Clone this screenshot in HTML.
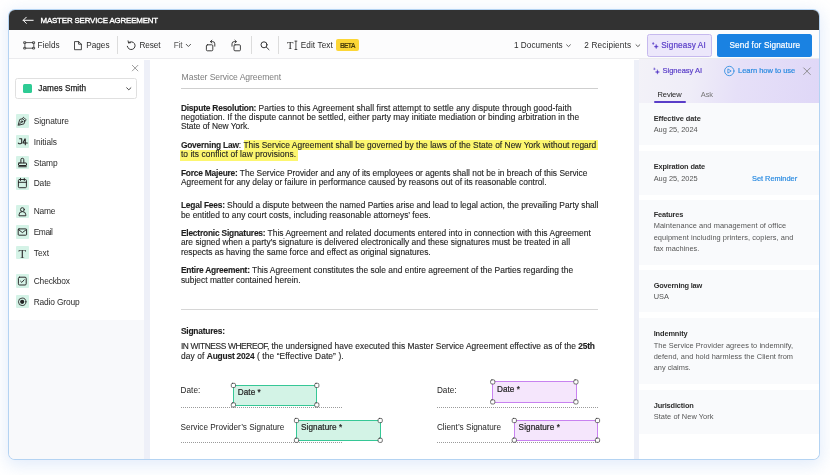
<!DOCTYPE html>
<html lang="en"><head><meta charset="utf-8"><title>Master Service Agreement</title>
<style>
html,body{margin:0;padding:0;}
body{width:830px;height:475px;position:relative;overflow:hidden;background:#fff;font-family:"Liberation Sans",sans-serif;}
.t{position:absolute;white-space:nowrap;line-height:12px;height:12px;}
.a{position:absolute;}
b{font-weight:700;letter-spacing:-0.2px;}
.hl{background:#fbf66b;padding:1.3px 1.5px 1.3px 0;}
svg{position:absolute;overflow:visible;}
.ib{left:15.5px;width:13.3px;height:13.3px;background:#d5f3e7;border-radius:1px;}
.dot{height:0;border-top:1px dotted #9a9a9a;}
.fg{background:#d3f3e6;border:1.3px solid #36c796;box-sizing:border-box;}
.fp{background:#f5e6fc;border:1.4px solid #c882f0;box-sizing:border-box;}
.txt{position:absolute;left:0;top:0;width:830px;height:475px;will-change:transform;}

</style></head><body>
<!-- outer frame -->
<div class="a" id="frame" style="left:9px;top:10px;width:810px;height:448.6px;border-radius:6px;box-shadow:0 0 0 1px #b4d3f2, 0 4px 16px 3px rgba(130,175,235,0.22);background:#fff;overflow:hidden;">
  <!-- header -->
  <div class="a" style="left:0;top:0;width:811px;height:19.6px;background:#323232;"></div>
  <!-- toolbar -->
  <div class="a" style="left:0;top:19.6px;width:811px;height:29.9px;background:#fcfcfd;border-bottom:1px solid #ebebee;box-sizing:border-box;"></div>
  <!-- workspace bg -->
  <div class="a" style="left:0;top:49.5px;width:811px;height:401px;background:#eef0f8;"></div>
  <!-- sidebar -->
  <div class="a" style="left:0;top:49px;width:135px;height:401px;background:#f8f9fb;"></div>
  <div class="a" style="left:0;top:49px;width:135px;height:260.6px;background:#fff;"></div>
  <!-- document -->
  <div class="a" style="left:141px;top:49px;width:483.5px;height:401px;background:#fff;"></div>
  <!-- right panel -->
  <div class="a" style="left:630px;top:49px;width:181px;height:401px;background:#fff;"></div>
  <div class="a" style="left:630px;top:49px;width:181px;height:44px;background:linear-gradient(100deg,#f3f2f8 0%,#efedf8 30%,#e6e0f8 55%,#dfd7f7 100%);"></div>
  <div class="a" style="left:630px;top:93px;width:181px;height:42px;background:#f9fafc;"></div>
  <div class="a" style="left:630px;top:141px;width:181px;height:43.5px;background:#f9fafc;"></div>
  <div class="a" style="left:630px;top:190px;width:181px;height:64.5px;background:#f9fafc;"></div>
  <div class="a" style="left:630px;top:260px;width:181px;height:42px;background:#f9fafc;"></div>
  <div class="a" style="left:630px;top:308px;width:181px;height:65.5px;background:#f9fafc;"></div>
  <div class="a" style="left:630px;top:379.5px;width:181px;height:44px;background:#f9fafc;"></div>
</div>

<!-- toolbar dividers -->
<div class="a" style="left:117px;top:36px;width:1px;height:18px;background:#dcdcdc;"></div>
<div class="a" style="left:251px;top:36px;width:1px;height:18px;background:#dcdcdc;"></div>
<div class="a" style="left:278px;top:36px;width:1px;height:18px;background:#dcdcdc;"></div>
<!-- BETA badge -->
<div class="a" style="left:335.9px;top:39.4px;width:22.8px;height:11.7px;background:#fcd636;border-radius:2px;"></div>
<!-- Signeasy AI button -->
<div class="a" style="left:646.6px;top:33.6px;width:65.4px;height:23px;background:#ece7fb;border:1px solid #c6b9ee;border-radius:2.5px;box-sizing:border-box;"></div>
<!-- Send button -->
<div class="a" style="left:716.9px;top:33.6px;width:95.2px;height:23px;background:#1a82e2;border-radius:2.5px;"></div>

<!-- select box -->
<div class="a" style="left:15.1px;top:77.9px;width:122px;height:21.6px;border:1px solid #e0e0e0;border-radius:2.5px;box-sizing:border-box;background:#fff;"></div>
<div class="a" style="left:23.1px;top:84px;width:9.2px;height:9.1px;background:#2ecb94;border-radius:1.5px;"></div>

<!-- sidebar icon boxes -->
<div class="a ib" style="top:114.4px"></div>
<div class="a ib" style="top:135.1px"></div>
<div class="a ib" style="top:155.8px"></div>
<div class="a ib" style="top:176.5px"></div>
<div class="a ib" style="top:204.9px"></div>
<div class="a ib" style="top:225.4px"></div>
<div class="a ib" style="top:246.2px"></div>
<div class="a ib" style="top:274.3px"></div>
<div class="a ib" style="top:295.2px"></div>

<!-- highlight -->
<div class="a" style="left:243.8px;top:140.1px;width:354.2px;height:9.8px;background:#fcf66f;"></div>
<div class="a" style="left:179.8px;top:149.8px;width:118.6px;height:11.2px;background:#fcf66f;"></div>
<!-- doc rules -->
<div class="a" style="left:181px;top:87.5px;width:417px;height:1px;background:#cfcfcf;"></div>
<div class="a" style="left:181px;top:309px;width:417px;height:1px;background:#d6d6d6;"></div>
<!-- dotted lines -->
<div class="a dot" style="left:180.6px;top:407px;width:161px;"></div>
<div class="a dot" style="left:180.6px;top:441.5px;width:161px;"></div>
<div class="a dot" style="left:436.9px;top:407px;width:161.5px;"></div>
<div class="a dot" style="left:436.9px;top:441.5px;width:161.5px;"></div>
<!-- fields -->
<div class="a fg" style="left:232.75px;top:384.75px;width:84.70px;height:20.80px;"></div>
<div class="a fg" style="left:295.85px;top:419.85px;width:85.00px;height:21.10px;"></div>
<div class="a fp" style="left:492.05px;top:381.25px;width:84.50px;height:21.30px;"></div>
<div class="a fp" style="left:513.65px;top:419.85px;width:84.50px;height:21.00px;"></div>

<!-- tab underline -->
<div class="a" style="left:653.7px;top:101.3px;width:32.2px;height:1.9px;background:#5a3ec8;border-radius:1px;"></div>
<svg class="a" style="left:0;top:0;" width="830" height="475" viewBox="0 0 830 475" fill="none" stroke-linecap="round" stroke-linejoin="round">
  <!-- back arrow -->
  <path d="M33.2 20.3H23.2M26.3 17.2L23.2 20.3L26.3 23.4" stroke="#fff" stroke-width="1"/>
  <!-- Fields icon -->
  <g stroke="#2b2b2b" stroke-width="0.8">
    <path d="M25.7 42.6H33.0M25.7 48.2H33.0M24.9 43.4V47.400000000000006M33.8 43.4V47.400000000000006" />
    <rect x="24.10" y="41.80" width="1.6" height="1.6" fill="#fff"/><rect x="24.10" y="47.40" width="1.6" height="1.6" fill="#fff"/><rect x="33.00" y="41.80" width="1.6" height="1.6" fill="#fff"/><rect x="33.00" y="47.40" width="1.6" height="1.6" fill="#fff"/>
  </g>
  <!-- Pages icon -->
  <path d="M74.9 41.6H78.6L81.4 44.2V49.7H74.9Z M78.6 41.6V44.2H81.4" stroke="#2b2b2b" stroke-width="0.85"/>
  <!-- Reset icon -->
  <path d="M128.6 42.7A3.9 3.9 0 1 1 127.3 46.3" stroke="#2b2b2b" stroke-width="0.95"/>
  <path d="M128.1 40.9L128.5 42.9L130.5 42.7" stroke="#2b2b2b" stroke-width="0.95"/>
  <!-- Fit chevron -->
  <path d="M186.2 44.3L188.4 46.5L190.6 44.3" stroke="#444" stroke-width="0.9"/>
  <!-- rotate left -->
  <g stroke="#2b2b2b" stroke-width="0.9">
    <rect x="206.4" y="44.8" width="6.4" height="6" rx="1"/>
    <path d="M210.6 41.6H212.6A2.2 2.2 0 0 1 214.8 43.8V46.2"/>
    <path d="M211.9 40.2L210.4 41.6L211.9 43"/>
  </g>
  <!-- rotate right -->
  <g stroke="#2b2b2b" stroke-width="0.9">
    <rect x="234" y="44.8" width="6.4" height="6" rx="1"/>
    <path d="M236.2 41.6H234.2A2.2 2.2 0 0 0 232 43.8V46.2"/>
    <path d="M234.9 40.2L236.4 41.6L234.9 43"/>
  </g>
  <!-- search -->
  <circle cx="264" cy="44.8" r="3" stroke="#2b2b2b" stroke-width="0.95"/>
  <path d="M266.3 47.1L269 49.7" stroke="#2b2b2b" stroke-width="0.95"/>
  <!-- I-beam of edit text -->
  <path d="M295.9 41.3V49.3M294.9 41.1H296.9M294.9 49.5H296.9" stroke="#2b2b2b" stroke-width="0.8"/>
  <!-- chevrons docs / recipients -->
  <path d="M566.6 44.8L568.5 46.6L570.4 44.8" stroke="#444" stroke-width="0.85"/>
  <path d="M636 44.8L637.9 46.6L639.8 44.8" stroke="#444" stroke-width="0.85"/>
  <!-- sparkles (button) -->
  <g fill="#5a3ec8" stroke="#5a3ec8" stroke-width="0.3">
    <path d="M656.20 44.40L656.82 45.98L658.40 46.60L656.82 47.22L656.20 48.80L655.58 47.22L654.00 46.60L655.58 45.98Z"/>
    <path d="M653.20 42.50L653.51 43.29L654.30 43.60L653.51 43.91L653.20 44.70L652.89 43.91L652.10 43.60L652.89 43.29Z"/>
  </g>
  <!-- sparkles (panel) -->
  <g fill="#5a3ec8" stroke="#5a3ec8" stroke-width="0.3">
    <path d="M657.40 69.80L658.02 71.38L659.60 72.00L658.02 72.62L657.40 74.20L656.78 72.62L655.20 72.00L656.78 71.38Z"/>
    <path d="M654.40 67.90L654.71 68.69L655.50 69.00L654.71 69.31L654.40 70.10L654.09 69.31L653.30 69.00L654.09 68.69Z"/>
  </g>
  <!-- play icon -->
  <circle cx="729.3" cy="71" r="4.7" stroke="#2b8be0" stroke-width="0.85"/>
  <path d="M728.2 69.1L731.2 71L728.2 72.9Z" stroke="#2b8be0" stroke-width="0.8"/>
  <!-- panel close -->
  <path d="M803.7 67.9L810.3 74.5M810.3 67.9L803.7 74.5" stroke="#808080" stroke-width="0.85"/>
  <!-- sidebar close -->
  <path d="M132.3 65.3L137.9 70.9M137.9 65.3L132.3 70.9" stroke="#858585" stroke-width="0.8"/>
  <!-- select chevron -->
  <path d="M126.7 87.8L128.8 89.8L130.9 87.8" stroke="#333" stroke-width="0.9"/>

  <!-- sidebar icons -->
  <g stroke="#262626" stroke-width="0.95">
    <!-- signature pen nib -->
    <g transform="translate(17.5,126) scale(0.4,-0.4)" stroke-width="2.3">
      <path d="M15.707 21.293a1 1 0 0 1-1.414 0l-1.586-1.586a1 1 0 0 1 0-1.414l5.586-5.586a1 1 0 0 1 1.414 0l1.586 1.586a1 1 0 0 1 0 1.414z"/>
      <path d="m18 13-1.375-6.874a1 1 0 0 0-.746-.776L3.235 2.028a1 1 0 0 0-1.207 1.207L5.35 15.879a1 1 0 0 0 .776.746L13 18"/>
      <path d="m2.3 2.3 7.286 7.286"/><circle cx="11" cy="11" r="2"/>
    </g>
    <!-- initials -->
    <path d="M19.6 138.7H21.7V142.4C21.7 144 19.4 144.2 18.3 143.1" stroke-width="1.05"/>
    <path d="M24.9 138.9L22.9 143H27.3M25.3 138.9V144.8" stroke-width="1.05"/>
    <!-- stamp -->
    <path d="M20.9 162.8V159.7A1.45 1.45 0 0 1 23.8 159.7V162.8" stroke-width="1"/>
    <rect x="18.5" y="163" width="8" height="2.5" rx="0.5" stroke-width="1"/>
    <path d="M18.7 166.7H26.3" stroke-width="1.1"/>
    <!-- calendar -->
    <rect x="18.4" y="179.5" width="8" height="8.2" rx="1"/>
    <path d="M18.4 182.3H26.4M20.5 178.3V180.5M24.3 178.3V180.5"/>
    <!-- name -->
    <circle cx="22.4" cy="209.6" r="1.9"/>
    <path d="M19 215.4V214.8A3.4 3.2 0 0 1 25.8 214.8V215.4Z"/>
    <!-- email -->
    <rect x="18.2" y="228.9" width="8.4" height="6.3" rx="0.8"/>
    <path d="M18.5 229.6L22.4 232.6L26.3 229.6"/>
    <!-- checkbox -->
    <rect x="18.4" y="277.2" width="7.8" height="7.8" rx="1.2"/>
    <path d="M20.6 281.2L21.8 282.4L24.2 279.8"/>
    <!-- radio -->
    <circle cx="22.2" cy="301.8" r="3.75" stroke-width="0.85"/>
    <circle cx="22.2" cy="301.8" r="2.1" fill="#222" stroke="none"/>
  </g>

  <!-- field handles -->
  <g fill="#fff" stroke="#3a3a3a" stroke-width="0.7">
    <rect x="231.30" y="383.30" width="4.2" height="4.2" rx="1.3"/>
    <rect x="314.70" y="383.30" width="4.2" height="4.2" rx="1.3"/>
    <rect x="231.30" y="402.80" width="4.2" height="4.2" rx="1.3"/>
    <rect x="314.70" y="402.80" width="4.2" height="4.2" rx="1.3"/>
    <rect x="294.40" y="418.40" width="4.2" height="4.2" rx="1.3"/>
    <rect x="378.10" y="418.40" width="4.2" height="4.2" rx="1.3"/>
    <rect x="294.40" y="438.20" width="4.2" height="4.2" rx="1.3"/>
    <rect x="378.10" y="438.20" width="4.2" height="4.2" rx="1.3"/>
    <rect x="490.60" y="379.80" width="4.2" height="4.2" rx="1.3"/>
    <rect x="573.80" y="379.80" width="4.2" height="4.2" rx="1.3"/>
    <rect x="490.60" y="399.80" width="4.2" height="4.2" rx="1.3"/>
    <rect x="573.80" y="399.80" width="4.2" height="4.2" rx="1.3"/>
    <rect x="512.20" y="418.40" width="4.2" height="4.2" rx="1.3"/>
    <rect x="595.40" y="418.40" width="4.2" height="4.2" rx="1.3"/>
    <rect x="512.20" y="438.10" width="4.2" height="4.2" rx="1.3"/>
    <rect x="595.40" y="438.10" width="4.2" height="4.2" rx="1.3"/>
  </g>

</svg>

<div class="txt">
<div class="t" style="left:40.50px;top:15.00px;font-size:7.9px;color:#fff;font-weight:400;letter-spacing:-0.159px;-webkit-text-stroke:0.35px #fff;">MASTER SERVICE AGREEMENT</div>
<div class="t" style="left:37.50px;top:39.60px;font-size:8.2px;color:#2b2b2b;font-weight:400;letter-spacing:0.059px;">Fields</div>
<div class="t" style="left:86.30px;top:39.60px;font-size:8.2px;color:#2b2b2b;font-weight:400;letter-spacing:-0.004px;">Pages</div>
<div class="t" style="left:139.50px;top:39.60px;font-size:8.2px;color:#2b2b2b;font-weight:400;letter-spacing:-0.078px;">Reset</div>
<div class="t" style="left:173.80px;top:39.60px;font-size:8.2px;color:#555;font-weight:400;letter-spacing:-0.170px;">Fit</div>
<div class="t" style="left:300.70px;top:39.60px;font-size:8.2px;color:#2b2b2b;font-weight:400;letter-spacing:0.106px;">Edit Text</div>
<div class="t" style="left:339.90px;top:39.60px;font-size:6.9px;color:#4a3d0a;font-weight:700;letter-spacing:-0.837px;">BETA</div>
<div class="t" style="left:513.90px;top:39.60px;font-size:8.2px;color:#2b2b2b;font-weight:400;letter-spacing:0.059px;">1 Documents</div>
<div class="t" style="left:584.30px;top:39.60px;font-size:8.2px;color:#2b2b2b;font-weight:400;letter-spacing:0.153px;">2 Recipients</div>
<div class="t" style="left:661.20px;top:39.80px;font-size:8.2px;color:#5a3ec8;font-weight:400;letter-spacing:0.123px;-webkit-text-stroke:0.2px #5a3ec8;">Signeasy AI</div>
<div class="t" style="left:729.40px;top:39.80px;font-size:8.2px;color:#fff;font-weight:400;letter-spacing:0.140px;-webkit-text-stroke:0.2px #fff;">Send for Signature</div>
<div class="t" style="left:38.30px;top:83.00px;font-size:8.2px;color:#222;font-weight:400;letter-spacing:0.043px;-webkit-text-stroke:0.25px #222;">James Smith</div>
<div class="t" style="left:33.70px;top:115.40px;font-size:8.4px;color:#2b2b2b;font-weight:400;letter-spacing:-0.073px;">Signature</div>
<div class="t" style="left:33.70px;top:136.10px;font-size:8.4px;color:#2b2b2b;font-weight:400;letter-spacing:-0.069px;">Initials</div>
<div class="t" style="left:33.70px;top:156.80px;font-size:8.4px;color:#2b2b2b;font-weight:400;letter-spacing:-0.084px;">Stamp</div>
<div class="t" style="left:33.70px;top:176.60px;font-size:8.4px;color:#2b2b2b;font-weight:400;letter-spacing:-0.126px;">Date</div>
<div class="t" style="left:33.70px;top:205.00px;font-size:8.4px;color:#2b2b2b;font-weight:400;letter-spacing:-0.211px;">Name</div>
<div class="t" style="left:33.70px;top:226.40px;font-size:8.4px;color:#2b2b2b;font-weight:400;letter-spacing:-0.431px;">Email</div>
<div class="t" style="left:33.70px;top:247.20px;font-size:8.4px;color:#2b2b2b;font-weight:400;letter-spacing:0.010px;">Text</div>
<div class="t" style="left:33.70px;top:275.30px;font-size:8.4px;color:#2b2b2b;font-weight:400;letter-spacing:-0.131px;">Checkbox</div>
<div class="t" style="left:33.70px;top:296.20px;font-size:8.4px;color:#2b2b2b;font-weight:400;letter-spacing:-0.155px;">Radio Group</div>
<div class="t" style="left:18.50px;top:248.20px;font-size:12.5px;color:#333;font-weight:400;font-family:'Liberation Serif',serif;">T</div>
<div class="t" style="left:287.10px;top:40.00px;font-size:10.5px;color:#2b2b2b;font-weight:400;font-family:'Liberation Serif',serif;">T</div>
<div class="t" style="left:181.60px;top:71.20px;font-size:8.6px;color:#7d7d7d;font-weight:400;letter-spacing:-0.078px;">Master Service Agreement</div>
<div class="t" style="left:180.90px;top:101.60px;font-size:8.4px;color:#1f1f1f;font-weight:400;letter-spacing:0.078px;-webkit-text-stroke:0.12px #1f1f1f;"><b>Dispute Resolution:</b> Parties to this Agreement shall first attempt to settle any dispute through good-faith</div>
<div class="t" style="left:180.90px;top:110.90px;font-size:8.4px;color:#1f1f1f;font-weight:400;letter-spacing:0.064px;-webkit-text-stroke:0.12px #1f1f1f;">negotiation. If the dispute cannot be settled, either party may initiate mediation or binding arbitration in the</div>
<div class="t" style="left:180.90px;top:120.30px;font-size:8.4px;color:#1f1f1f;font-weight:400;letter-spacing:-0.023px;-webkit-text-stroke:0.12px #1f1f1f;">State of New York.</div>
<div class="t" style="left:180.90px;top:139.00px;font-size:8.4px;color:#1f1f1f;font-weight:400;letter-spacing:0.041px;-webkit-text-stroke:0.12px #1f1f1f;"><b>Governing Law</b>: This Service Agreement shall be governed by the laws of the State of New York without regard</div>
<div class="t" style="left:180.90px;top:148.30px;font-size:8.4px;color:#1f1f1f;font-weight:400;letter-spacing:0.075px;-webkit-text-stroke:0.12px #1f1f1f;">to its conflict of law provisions.</div>
<div class="t" style="left:180.90px;top:166.70px;font-size:8.4px;color:#1f1f1f;font-weight:400;letter-spacing:0.002px;-webkit-text-stroke:0.12px #1f1f1f;"><b>Force Majeure:</b> The Service Provider and any of its employees or agents shall not be in breach of this Service</div>
<div class="t" style="left:180.90px;top:176.00px;font-size:8.4px;color:#1f1f1f;font-weight:400;letter-spacing:0.012px;-webkit-text-stroke:0.12px #1f1f1f;">Agreement for any delay or failure in performance caused by reasons out of its reasonable control.</div>
<div class="t" style="left:180.90px;top:199.00px;font-size:8.4px;color:#1f1f1f;font-weight:400;letter-spacing:-0.002px;-webkit-text-stroke:0.12px #1f1f1f;"><b>Legal Fees:</b> Should a dispute between the named Parties arise and lead to legal action, the prevailing Party shall</div>
<div class="t" style="left:180.90px;top:208.70px;font-size:8.4px;color:#1f1f1f;font-weight:400;letter-spacing:0.042px;-webkit-text-stroke:0.12px #1f1f1f;">be entitled to any court costs, including reasonable attorneys’ fees.</div>
<div class="t" style="left:180.90px;top:227.00px;font-size:8.4px;color:#1f1f1f;font-weight:400;letter-spacing:0.041px;-webkit-text-stroke:0.12px #1f1f1f;"><b>Electronic Signatures:</b> This Agreement and related documents entered into in connection with this Agreement</div>
<div class="t" style="left:180.90px;top:236.40px;font-size:8.4px;color:#1f1f1f;font-weight:400;letter-spacing:0.014px;-webkit-text-stroke:0.12px #1f1f1f;">are signed when a party’s signature is delivered electronically and these signatures must be treated in all</div>
<div class="t" style="left:180.90px;top:245.70px;font-size:8.4px;color:#1f1f1f;font-weight:400;letter-spacing:-0.008px;-webkit-text-stroke:0.12px #1f1f1f;">respects as having the same force and effect as original signatures.</div>
<div class="t" style="left:180.90px;top:264.40px;font-size:8.4px;color:#1f1f1f;font-weight:400;letter-spacing:0.037px;-webkit-text-stroke:0.12px #1f1f1f;"><b>Entire Agreement:</b> This Agreement constitutes the sole and entire agreement of the Parties regarding the</div>
<div class="t" style="left:180.90px;top:273.50px;font-size:8.4px;color:#1f1f1f;font-weight:400;letter-spacing:0.016px;-webkit-text-stroke:0.12px #1f1f1f;">subject matter contained herein.</div>
<div class="t" style="left:180.90px;top:324.80px;font-size:8.4px;color:#1f1f1f;font-weight:400;-webkit-text-stroke:0.12px #1f1f1f;"><b>Signatures:</b></div>
<div class="t" style="left:180.90px;top:339.80px;font-size:8.4px;color:#1f1f1f;font-weight:400;letter-spacing:0.044px;-webkit-text-stroke:0.12px #1f1f1f;"><span style="letter-spacing:-0.38px">IN WITNESS WHEREOF,</span> the undersigned have executed this Master Service Agreement effective as of the <b>25th</b></div>
<div class="t" style="left:180.90px;top:349.50px;font-size:8.4px;color:#1f1f1f;font-weight:400;letter-spacing:0.113px;-webkit-text-stroke:0.12px #1f1f1f;">day of <b>August 2024</b> ( the “Effective Date” ).</div>
<div class="t" style="left:180.60px;top:384.60px;font-size:8.2px;color:#1f1f1f;font-weight:400;letter-spacing:0.024px;">Date:</div>
<div class="t" style="left:180.60px;top:421.50px;font-size:8.2px;color:#1f1f1f;font-weight:400;letter-spacing:0.012px;">Service Provider’s Signature</div>
<div class="t" style="left:436.90px;top:384.60px;font-size:8.2px;color:#1f1f1f;font-weight:400;letter-spacing:0.024px;">Date:</div>
<div class="t" style="left:436.90px;top:421.50px;font-size:8.2px;color:#1f1f1f;font-weight:400;letter-spacing:0.009px;">Client’s Signature</div>
<div class="t" style="left:237.70px;top:387.30px;font-size:8.2px;color:#1d1d1d;font-weight:400;letter-spacing:0.072px;-webkit-text-stroke:0.2px #1d1d1d;">Date *</div>
<div class="t" style="left:301.00px;top:421.90px;font-size:8.2px;color:#1d1d1d;font-weight:400;letter-spacing:0.071px;-webkit-text-stroke:0.2px #1d1d1d;">Signature *</div>
<div class="t" style="left:497.00px;top:383.50px;font-size:8.2px;color:#1d1d1d;font-weight:400;letter-spacing:0.039px;-webkit-text-stroke:0.2px #1d1d1d;">Date *</div>
<div class="t" style="left:518.60px;top:421.90px;font-size:8.2px;color:#1d1d1d;font-weight:400;letter-spacing:0.071px;-webkit-text-stroke:0.2px #1d1d1d;">Signature *</div>
<div class="t" style="left:662.50px;top:64.90px;font-size:7.5px;color:#5a3ec8;font-weight:400;letter-spacing:-0.010px;-webkit-text-stroke:0.2px #5a3ec8;">Signeasy AI</div>
<div class="t" style="left:738.00px;top:64.90px;font-size:7.5px;color:#2b8be0;font-weight:400;letter-spacing:-0.022px;-webkit-text-stroke:0.2px #2b8be0;">Learn how to use</div>
<div class="t" style="left:657.50px;top:88.80px;font-size:7.5px;color:#222;font-weight:400;letter-spacing:-0.099px;">Review</div>
<div class="t" style="left:700.80px;top:88.80px;font-size:7.5px;color:#777;font-weight:400;letter-spacing:-0.172px;">Ask</div>
<div class="t" style="left:653.70px;top:113.20px;font-size:7.4px;color:#2e2e2e;font-weight:700;letter-spacing:-0.076px;">Effective date</div>
<div class="t" style="left:653.70px;top:124.30px;font-size:7.4px;color:#555;font-weight:400;">Aug 25, 2024</div>
<div class="t" style="left:653.70px;top:160.60px;font-size:7.4px;color:#2e2e2e;font-weight:700;letter-spacing:-0.133px;">Expiration date</div>
<div class="t" style="left:653.70px;top:172.60px;font-size:7.4px;color:#555;font-weight:400;">Aug 25, 2025</div>
<div class="t" style="left:752.00px;top:172.60px;font-size:7.4px;color:#2b8be0;font-weight:400;letter-spacing:-0.007px;-webkit-text-stroke:0.2px #2b8be0;">Set Reminder</div>
<div class="t" style="left:653.70px;top:208.60px;font-size:7.4px;color:#2e2e2e;font-weight:700;letter-spacing:-0.164px;">Features</div>
<div class="t" style="left:653.70px;top:220.00px;font-size:7.4px;color:#555;font-weight:400;letter-spacing:0.075px;">Maintenance and management of office</div>
<div class="t" style="left:653.70px;top:232.20px;font-size:7.4px;color:#555;font-weight:400;letter-spacing:0.069px;">equipment including printers, copiers, and</div>
<div class="t" style="left:653.70px;top:242.80px;font-size:7.4px;color:#555;font-weight:400;">fax machines.</div>
<div class="t" style="left:653.70px;top:280.40px;font-size:7.4px;color:#2e2e2e;font-weight:700;letter-spacing:-0.195px;">Governing law</div>
<div class="t" style="left:653.70px;top:291.10px;font-size:7.4px;color:#555;font-weight:400;">USA</div>
<div class="t" style="left:653.70px;top:328.40px;font-size:7.4px;color:#2e2e2e;font-weight:700;letter-spacing:-0.123px;">Indemnity</div>
<div class="t" style="left:653.70px;top:339.90px;font-size:7.4px;color:#555;font-weight:400;letter-spacing:0.057px;">The Service Provider agrees to indemnify,</div>
<div class="t" style="left:653.70px;top:350.50px;font-size:7.4px;color:#555;font-weight:400;letter-spacing:0.053px;">defend, and hold harmless the Client from</div>
<div class="t" style="left:653.70px;top:362.30px;font-size:7.4px;color:#555;font-weight:400;">any claims.</div>
<div class="t" style="left:653.70px;top:399.50px;font-size:7.4px;color:#2e2e2e;font-weight:700;letter-spacing:-0.158px;">Jurisdiction</div>
<div class="t" style="left:653.70px;top:410.60px;font-size:7.4px;color:#555;font-weight:400;letter-spacing:0.068px;">State of New York</div>
</div>
</body></html>
